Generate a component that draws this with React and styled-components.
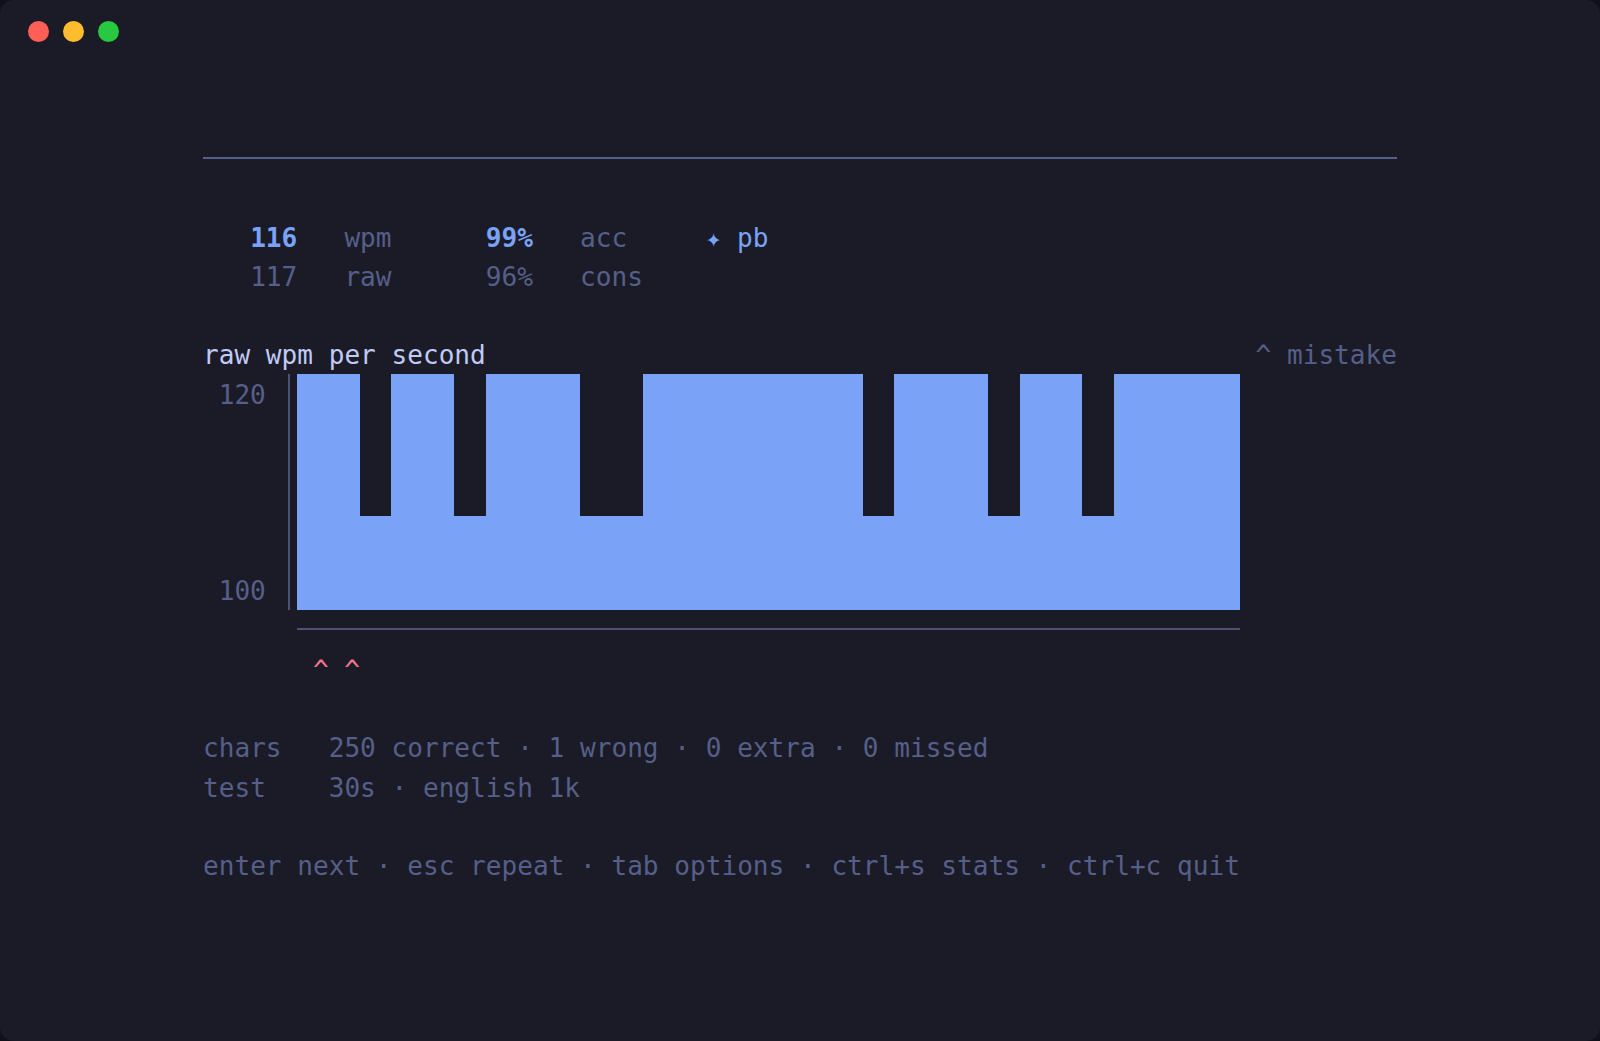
import React from "react";
import styled, { createGlobalStyle } from "styled-components";

const C = {
  bg: "#1a1b26",
  dim: "#565f89",
  blue: "#7aa2f7",
  fg: "#c0caf5",
  red: "#f7768e",
  line: "#4b5275",
};

const ROW = 39.3;

const Global = createGlobalStyle`
  html, body { margin: 0; padding: 0; background: #101118; }
  body { width: 1600px; height: 1041px; overflow: hidden; }
`;

const Window = styled.div`
  width: 1600px;
  height: 1041px;
  background: ${C.bg};
  border-radius: 14px;
  overflow: hidden;
  display: flex;
  flex-direction: column;
`;

const TitleBar = styled.header`
  flex-shrink: 0;
  height: 62px;
  display: flex;
  align-items: center;
  gap: 14px;
  padding-left: 28px;
`;

const Light = styled.span`
  width: 21px;
  height: 21px;
  border-radius: 50%;
  background: ${(p) => p.$c};
`;

const Terminal = styled.main`
  font-family: "DejaVu Sans Mono", "Liberation Mono", monospace;
  font-size: 26.1px;
  line-height: ${ROW + 4}px;
  color: ${C.dim};
  padding: 76px 0 0 203px;
  width: 76ch;
  white-space: pre;
`;

const Row = styled.div`
  height: ${ROW}px;
  padding-left: ${(p) => (p.$indent ? `${p.$indent}ch` : 0)};
  color: ${(p) => p.$color || "inherit"};
`;

const Spacer = styled.div`
  height: ${(p) => p.$rows * ROW}px;
`;

const Rule = styled.div`
  height: ${ROW}px;
  display: flex;
  align-items: center;
  &::after {
    content: "";
    flex: 1;
    height: 2px;
    background: ${C.dim};
  }
`;

const StatsRow = styled.div`
  height: ${ROW}px;
  padding-left: 3ch;
  display: grid;
  grid-template-columns: 6ch 9ch 6ch 8ch auto;
`;

const Val = styled.span`
  color: ${(p) => p.$color || C.dim};
  font-weight: ${(p) => (p.$bold ? 700 : 400)};
`;

const Badge = styled.span`
  color: ${C.blue};
  display: inline-flex;
`;

const Star = styled.span`
  width: 2ch;
  display: inline-block;
`;

const ChartHeader = styled.div`
  height: ${ROW}px;
  display: flex;
  justify-content: space-between;
`;

const ChartTitle = styled.span`
  color: ${C.fg};
`;

const ChartBody = styled.div`
  height: ${ROW * 6}px;
  display: flex;
`;

const YAxis = styled.div`
  width: 4ch;
  margin-right: 1ch;
  display: flex;
  flex-direction: column;
  justify-content: space-between;
  text-align: right;
`;

const YLabel = styled.span`
  height: ${ROW}px;
`;

const VLine = styled.div`
  width: 1ch;
  display: flex;
  justify-content: center;
  &::before {
    content: "";
    width: 2px;
    height: 100%;
    background: ${C.line};
  }
`;

const Plot = styled.svg`
  width: 60ch;
  height: 100%;
  display: block;
`;

const XAxis = styled.div`
  height: ${ROW}px;
  padding-left: 6ch;
  display: flex;
  align-items: center;
  &::after {
    content: "";
    width: 60ch;
    height: 2px;
    background: ${C.line};
  }
`;

const InfoRow = styled.div`
  height: ${ROW}px;
  display: grid;
  grid-template-columns: 8ch auto;
`;

const DIPS = new Set([4, 5, 10, 11, 18, 19, 20, 21, 36, 37, 44, 45, 50, 51]);
const heights = Array.from({ length: 60 }, (_, i) => (DIPS.has(i) ? 2.395 : 6));

function barPath(hs) {
  let d = "M0 6";
  hs.forEach((h, i) => {
    const y = (6 - h).toFixed(3);
    d += ` L${i} ${y} L${i + 1} ${y}`;
  });
  d += " L60 6 Z";
  return d;
}

export default function App() {
  return (
    <>
      <Global />
      <Window>
        <TitleBar>
          <Light $c="#ff5f57" />
          <Light $c="#febc2e" />
          <Light $c="#28c840" />
        </TitleBar>
        <Terminal>
          <Rule />
          <Spacer $rows={1} />
          <StatsRow>
            <Val $color={C.blue} $bold>116</Val>
            <Val>wpm</Val>
            <Val $color={C.blue} $bold>99%</Val>
            <Val>acc</Val>
            <Badge>
              <Star>✦</Star>
              <span>pb</span>
            </Badge>
          </StatsRow>
          <StatsRow>
            <Val>117</Val>
            <Val>raw</Val>
            <Val>96%</Val>
            <Val>cons</Val>
          </StatsRow>
          <Spacer $rows={1} />
          <ChartHeader>
            <ChartTitle>raw wpm per second</ChartTitle>
            <span>^ mistake</span>
          </ChartHeader>
          <ChartBody>
            <YAxis>
              <YLabel>120</YLabel>
              <YLabel>100</YLabel>
            </YAxis>
            <VLine />
            <Plot viewBox="0 0 60 6" preserveAspectRatio="none">
              <path d={barPath(heights)} fill={C.blue} shapeRendering="crispEdges" />
            </Plot>
          </ChartBody>
          <XAxis />
          <Row $indent={7} $color={C.red}>^ ^</Row>
          <Spacer $rows={1} />
          <InfoRow>
            <span>chars</span>
            <span>250 correct · 1 wrong · 0 extra · 0 missed</span>
          </InfoRow>
          <InfoRow>
            <span>test</span>
            <span>30s · english 1k</span>
          </InfoRow>
          <Spacer $rows={1} />
          <Row>enter next · esc repeat · tab options · ctrl+s stats · ctrl+c quit</Row>
        </Terminal>
      </Window>
    </>
  );
}
